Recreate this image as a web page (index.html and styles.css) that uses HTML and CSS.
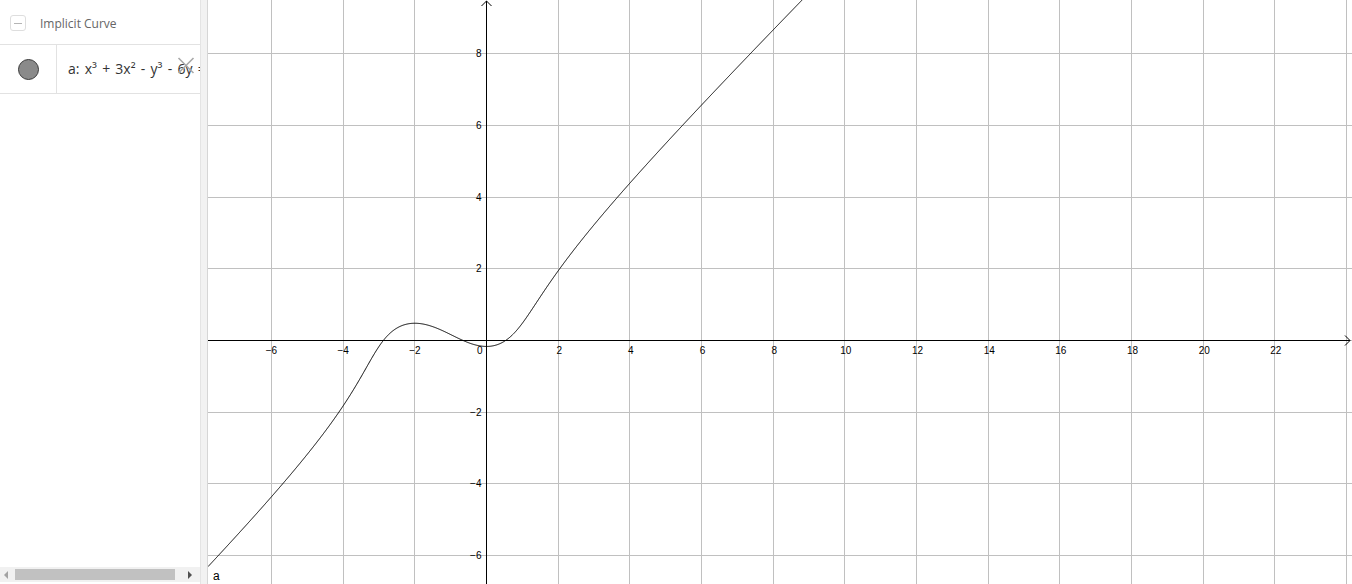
FILE: index.html
```html
<!DOCTYPE html>
<html>
<head>
<meta charset="utf-8">
<link rel="stylesheet" href="styles.css">
</head>
<body>
<div class="app">
  <aside class="algebra">
    <div class="algebra-list">
      <div class="group-header">
        <span class="collapse-btn"><span class="minus"></span></span>
        <span class="group-title">Implicit Curve</span>
      </div>
      <div class="item">
        <div class="marble-cell"><span class="marble"></span></div>
        <div class="formula">a: x³ + 3x² - y³ - 6y = 1</div>
        <span class="delete">
          <svg width="18" height="17" viewBox="0 0 18 17"><path d="M1.5 1 L16.5 16 M16.5 1 L1.5 16" stroke="#a9a9a9" stroke-width="1.6" fill="none"/></svg>
        </span>
      </div>
    </div>
    <div class="hscroll">
      <span class="arrow arrow-left"></span>
      <span class="track"><span class="thumb"></span></span>
      <span class="arrow arrow-right"></span>
    </div>
  </aside>
  <div class="splitter"></div>
  <main class="graphics">
    <svg id="plot" class="plot" width="1144" height="584"></svg>
  </main>
</div>
<script src="script.js"></script>
</body>
</html>
```
FILE: styles.css
```css
* { box-sizing: border-box; }
html, body { margin: 0; padding: 0; background: #fff; }
body { font-family: "Open Sans", "DejaVu Sans", sans-serif; overflow: hidden; }
.app { display: flex; width: 1352px; height: 584px; }
.algebra { width: 200px; height: 584px; display: flex; flex-direction: column; background: #fff; }
.algebra-list { flex: 1; overflow: hidden; }
.group-header { height: 45px; border-bottom: 1px solid #e2e2e2; display: flex; align-items: center; padding-left: 10px; padding-top: 2px; }
.collapse-btn { width: 16px; height: 16px; border: 1px solid #dedede; border-radius: 3px; display: flex; align-items: center; justify-content: center; }
.minus { width: 8px; height: 1px; background: #b5b5b5; }
.group-title { margin-left: 14px; font-size: 12px; color: #666; }
.item { position: relative; height: 49px; border-bottom: 1px solid #e2e2e2; display: flex; }
.marble-cell { width: 57px; border-right: 1px solid #e2e2e2; display: flex; align-items: center; justify-content: center; padding-left: 1px; padding-top: 1px; }
.marble { width: 21px; height: 21px; border-radius: 50%; background: #8a8a8a; border: 1px solid #3a3a3a; }
.formula { flex: 1; padding-left: 11px; font-size: 14px; word-spacing: 1.6px; color: #333; white-space: nowrap; overflow: hidden; line-height: 47px; }
.delete { position: absolute; left: 177px; top: 12px; width: 18px; height: 17px; }
.delete svg { display: block; }
.hscroll { height: 15px; margin-bottom: 2px; background: #f1f1f1; display: flex; align-items: center; }
.track { flex: 1; height: 100%; display: flex; align-items: center; padding-left: 3px; }
.thumb { width: 160px; height: 11px; background: #c1c1c1; }
.arrow { width: 12px; height: 100%; display: flex; align-items: center; justify-content: center; }
.arrow-left::before { content: ""; border-top: 4px solid transparent; border-bottom: 4px solid transparent; border-right: 4px solid #a3a3a3; }
.arrow-right { width: 21px; }
.arrow-right::before { content: ""; border-top: 4px solid transparent; border-bottom: 4px solid transparent; border-left: 4px solid #505050; }
.splitter { width: 8px; height: 584px; background: #f2f2f2; border-left: 1px solid #e4e4e4; border-right: 1px solid #d6d6d6; }
.graphics { flex: 1; height: 584px; overflow: hidden; background: #fff; }
.plot { display: block; }
.plot text { font-family: "Liberation Sans", Arial, sans-serif; font-size: 10px; fill: #000; }
.plot text.curve-label { font-size: 12px; }
```
FILE: script.js
```js
(function () {
  var svg = document.getElementById('plot');
  var NS = 'http://www.w3.org/2000/svg';
  var W = 1144, H = 584;
  var ox = 278.5, oy = 340.5, u = 35.835;
  function el(name, attrs, text) {
    var e = document.createElementNS(NS, name);
    for (var k in attrs) e.setAttribute(k, attrs[k]);
    if (text !== undefined) e.textContent = text;
    svg.appendChild(e);
    return e;
  }
  function snap(v) { return Math.floor(v) + 0.5; }
  var k, x, y;
  for (k = -8; k <= 32; k += 2) {
    x = snap(ox + k * u);
    if (x < 0 || x > W) continue;
    el('line', { x1: x, y1: 0, x2: x, y2: H, stroke: '#c0c0c0', 'stroke-width': 1 });
  }
  for (k = -10; k <= 10; k += 2) {
    y = snap(oy - k * u);
    if (y < 0 || y > H) continue;
    el('line', { x1: 0, y1: y, x2: W, y2: y, stroke: '#c0c0c0', 'stroke-width': 1 });
  }
  el('line', { x1: 0, y1: oy, x2: W - 2, y2: oy, stroke: '#000', 'stroke-width': 1 });
  el('line', { x1: ox, y1: 1, x2: ox, y2: H, stroke: '#000', 'stroke-width': 1 });
  el('polyline', { points: (W - 7) + ',' + (oy - 5) + ' ' + (W - 2) + ',' + oy + ' ' + (W - 7) + ',' + (oy + 5), fill: 'none', stroke: '#000', 'stroke-width': 1 });
  el('polyline', { points: (ox - 5) + ',6 ' + ox + ',1 ' + (ox + 5) + ',6', fill: 'none', stroke: '#000', 'stroke-width': 1 });
  for (k = -6; k <= 22; k += 2) {
    if (k === 0) continue;
    x = ox + k * u;
    var t = (k < 0 ? '\u2212' : '') + Math.abs(k);
    el('text', { x: x + (k < 0 ? 0 : 1), y: oy + 13.5, 'text-anchor': 'middle' }, t);
  }
  el('text', { x: ox - 4, y: oy + 13.5, 'text-anchor': 'end' }, '0');
  for (k = -6; k <= 8; k += 2) {
    if (k === 0) continue;
    y = oy - k * u;
    var s = (k < 0 ? '\u2212' : '') + Math.abs(k);
    el('text', { x: ox - 5, y: y + 3.5, 'text-anchor': 'end' }, s);
  }
  var pts = [];
  for (var px = 0; px <= W; px += 0.5) {
    x = (px - ox) / u;
    var r = x * x * x + 3 * x * x - 1;
    var q = -r, p = 6;
    var D = Math.sqrt(q * q / 4 + p * p * p / 27);
    var yy = Math.cbrt(-q / 2 + D) + Math.cbrt(-q / 2 - D);
    var py = oy - yy * u;
    if (py < -50) break;
    pts.push(px.toFixed(2) + ',' + py.toFixed(2));
  }
  el('polyline', { points: pts.join(' '), fill: 'none', stroke: '#000', 'stroke-width': 1 });
  el('text', { x: 5, y: 580, 'class': 'curve-label' }, 'a');
})();
```
